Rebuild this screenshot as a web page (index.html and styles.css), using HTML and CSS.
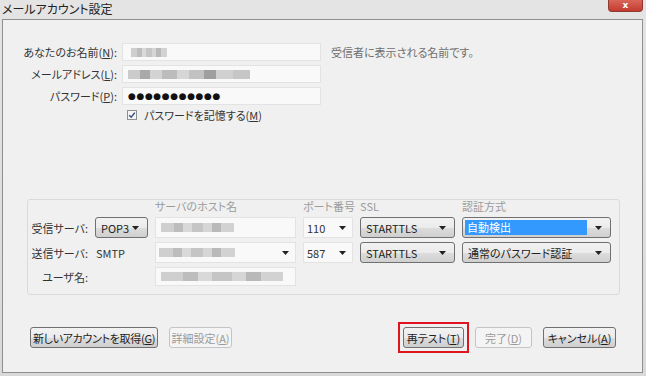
FILE: index.html
```html
<!DOCTYPE html>
<html>

<head>
    <meta charset="UTF-8">
    <title>メールアカウント設定</title>
    <link rel="stylesheet" href="styles.css">
</head>

<body>
    <div class="window">
        <div class="titlebar">
            <span class="title">メールアカウント設定</span>
            <span class="close">x</span>
        </div>
        <div class="panel">
            <!-- 名前・アドレス・パスワード -->
            <div class="identity">
                <div class="row">
                    <span class="label">あなたのお名前(<u>N</u>):</span>
                    <div class="field"><span class="mosaic m-name"></span></div>
                    <span class="hint">受信者に表示される名前です。</span>
                </div>
                <div class="row">
                    <span class="label">メールアドレス(<u>L</u>):</span>
                    <div class="field"><span class="mosaic m-mail"></span></div>
                </div>
                <div class="row">
                    <span class="label">パスワード(<u>P</u>):</span>
                    <div class="field"><span class="dots">●●●●●●●●●●●</span></div>
                </div>
                <div class="row check-row">
                    <svg class="checkbox" width="10" height="10" viewBox="0 0 10 10">
                        <rect x="0.5" y="0.5" width="9" height="9" fill="#f4f4f4" stroke="#8e8f8f" />
                        <path d="M2.2 5.2 L4.2 7.2 L7.8 2.6" fill="none" stroke="#3c4f86" stroke-width="1.5" />
                    </svg>
                    <span>パスワードを記憶する(<u>M</u>)</span>
                </div>
            </div>

            <!-- サーバ設定 -->
            <div class="servers">
                <span></span>
                <span></span>
                <span class="head">サーバのホスト名</span>
                <span class="head">ポート番号</span>
                <span class="head">SSL</span>
                <span class="head">認証方式</span>

                <span class="label">受信サーバ:</span>
                <div class="select">
                    <span class="select-text">POP3</span>
                    <svg class="caret" width="7" height="4" viewBox="0 0 7 4"><path d="M0 0h7L3.5 4z" /></svg>
                </div>
                <div class="field wide"><span class="mosaic m-host1"></span></div>
                <div class="field combo"><span class="combo-text">110</span>
                    <svg class="caret" width="7" height="4" viewBox="0 0 7 4"><path d="M0 0h7L3.5 4z" /></svg>
                </div>
                <div class="select">
                    <span class="select-text">STARTTLS</span>
                    <svg class="caret" width="7" height="4" viewBox="0 0 7 4"><path d="M0 0h7L3.5 4z" /></svg>
                </div>
                <div class="select">
                    <span class="selected">自動検出</span>
                    <svg class="caret" width="7" height="4" viewBox="0 0 7 4"><path d="M0 0h7L3.5 4z" /></svg>
                </div>

                <span class="label">送信サーバ:</span>
                <span class="plain">SMTP</span>
                <div class="field combo"><span class="mosaic m-host2"></span>
                    <svg class="caret" width="7" height="4" viewBox="0 0 7 4"><path d="M0 0h7L3.5 4z" /></svg>
                </div>
                <div class="field combo"><span class="combo-text">587</span>
                    <svg class="caret" width="7" height="4" viewBox="0 0 7 4"><path d="M0 0h7L3.5 4z" /></svg>
                </div>
                <div class="select">
                    <span class="select-text">STARTTLS</span>
                    <svg class="caret" width="7" height="4" viewBox="0 0 7 4"><path d="M0 0h7L3.5 4z" /></svg>
                </div>
                <div class="select">
                    <span class="select-text">通常のパスワード認証</span>
                    <svg class="caret" width="7" height="4" viewBox="0 0 7 4"><path d="M0 0h7L3.5 4z" /></svg>
                </div>

                <span class="label">ユーザ名:</span>
                <span></span>
                <div class="field"><span class="mosaic m-user"></span></div>
            </div>

            <!-- ボタン -->
            <div class="actions">
                <div class="actions-left">
                    <button class="btn w-new">新しいアカウントを取得(<u>G</u>)</button>
                    <button class="btn w-adv" disabled>詳細設定(<u>A</u>)</button>
                </div>
                <div class="actions-right">
                    <span class="marked">
                        <button class="btn w-retest">再テスト(<u>T</u>)</button>
                    </span>
                    <button class="btn w-done" disabled>完了(<u>D</u>)</button>
                    <button class="btn w-cancel">キャンセル(<u>A</u>)</button>
                </div>
            </div>
        </div>
    </div>
</body>

</html>
```

FILE: styles.css
```css
* {
    box-sizing: border-box;
}

body {
    margin: 0;
    font-family: "Noto Sans CJK JP", sans-serif;
    font-size: 11px;
    color: #333;
    font-feature-settings: "palt" 1;
}

.window {
    width: 646px;
    height: 376px;
    background: linear-gradient(#e4e4e4, #d9d9d9);
    display: flex;
    flex-direction: column;
    padding: 0 3px 3px 2px;
}

.titlebar {
    height: 19px;
    display: flex;
    align-items: flex-start;
}

.title {
    font-size: 12px;
    line-height: 18px;
    color: #222;
}

.close {
    margin-left: auto;
    width: 35px;
    height: 12px;
    background: linear-gradient(#d9665a, #c43b2e);
    border: 1px solid #8e3a33;
    border-top: none;
    border-radius: 0 0 4px 4px;
    color: #fff;
    font: bold 9px/10px "DejaVu Sans", sans-serif;
    text-align: center;
}

.panel {
    flex: 1;
    border: 1px solid #8e8f8f;
    background: #f0f0f0;
    display: flex;
    flex-direction: column;
}

.identity {
    padding-top: 23px;
}

.row {
    display: flex;
    align-items: center;
    height: 18px;
    margin-bottom: 4px;
}

.row .label {
    width: 114px;
    margin-right: 5px;
    text-align: right;
}

.field {
    width: 199px;
    height: 18px;
    background: #f9f9f9;
    border: 1px solid #e3e3e3;
    display: flex;
    align-items: center;
    padding-left: 5px;
}

.hint {
    margin-left: 10px;
    color: #6f6f6f;
}

.mosaic {
    display: inline-block;
    height: 9px;
    filter: blur(0.7px);
    background: linear-gradient(90deg, #cfcfcf 0 18%, #bdbdbd 18% 30%, #d9d9d9 30% 42%, #c5c5c5 42% 58%, #d6d6d6 58% 70%, #b9b9b9 70% 82%, #d2d2d2 82% 100%);
}

.m-name {
    width: 36px;
    margin-left: 3px;
}

.m-mail {
    width: 122px;
    background: linear-gradient(90deg, #cbcbcb 0 10%, #a9a9a9 10% 18%, #d3d3d3 18% 28%, #bcbcbc 28% 40%, #d6d6d6 40% 50%, #c2c2c2 50% 62%, #9f9f9f 62% 72%, #d0d0d0 72% 86%, #c6c6c6 86% 100%);
}

.m-host1 {
    width: 73px;
}

.m-host2 {
    width: 76px;
}

.m-user {
    width: 122px;
}

.dots {
    font-family: "DejaVu Sans", sans-serif;
    font-size: 9px;
    letter-spacing: 0.6px;
    color: #111;
}

.check-row {
    height: 14px;
    padding-left: 124px;
    margin-top: -1px;
}

.checkbox {
    margin-right: 7px;
}

.servers {
    margin: 73px 0 0 24px;
    width: 593px;
    border: 1px solid #dadada;
    border-radius: 3px;
    display: grid;
    grid-template-columns: 60px 53px 141px 50px 95px 149px;
    grid-template-rows: 13px 21px 21px 19px;
    column-gap: 7px;
    row-gap: 4px;
    padding-bottom: 8px;
    align-items: center;
    white-space: nowrap;
}

.servers .head {
    color: #9c9c9c;
    line-height: 13px;
}

.servers .label {
    text-align: right;
}

.servers .field {
    width: auto;
    height: 100%;
}

.plain {
    padding-left: 1px;
}

.combo {
    justify-content: space-between;
    padding: 0 6px 0 3px;
}

.select {
    height: 21px;
    border: 1px solid #707070;
    border-radius: 3px;
    background: linear-gradient(#f2f2f2 0%, #ebebeb 50%, #dddddd 51%, #cfcfcf 100%);
    display: flex;
    align-items: center;
    justify-content: space-between;
    padding: 0 8px 0 5px;
    color: #222;
}

.selected {
    flex: 1;
    height: 15px;
    margin: 0 8px 0 -3px;
    padding-left: 2px;
    line-height: 15px;
    background: #3399ff;
    color: #fff;
}

.caret {
    fill: #222;
    flex-shrink: 0;
}

.actions {
    margin-top: auto;
    padding: 0 26px 24px 27px;
    display: flex;
    justify-content: space-between;
}

.actions-left,
.actions-right {
    display: flex;
    gap: 11px;
}

.btn {
    height: 21px;
    padding: 0;
    border: 1px solid #707070;
    border-radius: 3px;
    background: linear-gradient(#f2f2f2 0%, #ebebeb 50%, #dddddd 51%, #cfcfcf 100%);
    font: 11px "Noto Sans CJK JP", sans-serif;
    font-feature-settings: "palt" 1;
    color: #222;
    white-space: nowrap;
}

.btn:disabled {
    border-color: #c2c5c7;
    background: #f4f4f4;
    color: #9a9a9a;
}

.w-new {
    width: 128px;
    letter-spacing: -0.3px;
}

.w-adv {
    width: 63px;
}

.w-retest {
    width: 61px;
}

.w-done {
    width: 57px;
}

.w-cancel {
    width: 73px;
}

/* 赤枠で囲むボタン */
.marked {
    display: flex;
    margin: -5px;
    padding: 3px;
    border: 2px solid #e0141e;
}
```
